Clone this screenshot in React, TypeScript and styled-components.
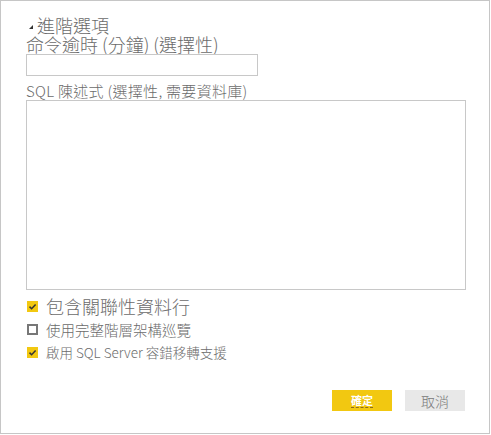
import React from 'react';
import styled, { createGlobalStyle } from 'styled-components';

const Global = createGlobalStyle`
  html, body { margin: 0; padding: 0; background: #fff; }
  body { font-family: "Noto Sans CJK TC", "Noto Sans", sans-serif; }
`;

const Panel = styled.div`
  width: 490px;
  height: 434px;
  box-sizing: border-box;
  border: 1px solid #c6c6c6;
  padding: 15px 24px 0 25px;
  display: flex;
  flex-direction: column;
  color: #6b6b6b;
`;

const Header = styled.div`
  display: flex;
  align-items: center;
  height: 19px;
  font-size: 18px;
  line-height: 19px;
  font-weight: 300;
`;

const Caret = styled.span`
  width: 0;
  height: 0;
  margin: 2px 4px 0 3px;
  border-left: 4px solid transparent;
  border-bottom: 4px solid #333;
`;

const Label = styled.div<{ $size: number; $spacing?: number }>`
  font-size: ${p => p.$size}px;
  line-height: ${p => p.$size + 1}px;
  letter-spacing: ${p => p.$spacing ?? 0}px;
  font-weight: 300;
  white-space: nowrap;
`;

const TextInput = styled.input`
  display: block;
  width: 232px;
  height: 22px;
  box-sizing: border-box;
  margin: 0;
  border: 1px solid #c8c8c8;
  outline: none;
`;

const TextBox = styled.textarea`
  display: block;
  width: 440px;
  height: 190px;
  box-sizing: border-box;
  margin: 1px 0 0;
  border: 1px solid #c8c8c8;
  resize: none;
  outline: none;
`;

const Options = styled.div`
  display: flex;
  flex-direction: column;
  margin-top: 4px;
`;

const OptionRow = styled.label<{ $size: number; $h: number }>`
  display: flex;
  align-items: center;
  gap: 8px;
  height: ${p => p.$h}px;
  font-size: ${p => p.$size}px;
  font-weight: 300;
  white-space: nowrap;
`;

const Box = styled.span<{ $checked: boolean }>`
  width: 11px;
  height: 11px;
  box-sizing: border-box;
  flex: none;
  display: flex;
  align-items: center;
  justify-content: center;
  margin-left: 1px;
  background: ${p => (p.$checked ? '#f2c811' : '#fff')};
  border: ${p => (p.$checked ? 'none' : '2px solid #777')};
`;

const Footer = styled.div`
  display: flex;
  justify-content: flex-end;
  gap: 13px;
  margin-top: auto;
  margin-bottom: 22px;
`;

const Button = styled.button<{ $primary?: boolean }>`
  width: 60px;
  height: 21px;
  border: none;
  padding: 0;
  font-family: inherit;
  cursor: pointer;
  background: ${p => (p.$primary ? '#f2c811' : '#e8e8e8')};
  color: ${p => (p.$primary ? '#fff' : '#777')};
  font-size: ${p => (p.$primary ? '11px' : '14px')};
  font-weight: ${p => (p.$primary ? 700 : 300)};
  display: flex;
  align-items: center;
  justify-content: center;
`;

const OkText = styled.span`
  line-height: 12px;
  border-bottom: 1px dashed #8a6a20;
  padding-bottom: 1px;
`;

const Check = () => (
  <svg width="9" height="9" viewBox="0 0 9 9">
    <path d="M1.5 4.6 L3.6 6.7 L7.6 2.4" fill="none" stroke="#333" strokeWidth="1.5" />
  </svg>
);

const Option = ({ checked, size, h, text }: { checked: boolean; size: number; h: number; text: string }) => (
  <OptionRow $size={size} $h={h}>
    <Box $checked={checked}>{checked && <Check />}</Box>
    {text}
  </OptionRow>
);

export default function App() {
  return (
    <>
      <Global />
      <Panel>
        <Header>
          <Caret />
          進階選項
        </Header>
        <Label $size={18}>命令逾時 (分鐘) (選擇性)</Label>
        <TextInput />
        <Label $size={15} $spacing={0.3} style={{ marginTop: 7 }}>SQL 陳述式 (選擇性, 需要資料庫)</Label>
        <TextBox />
        <Options>
          <Option checked size={18} h={24} text="包含關聯性資料行" />
          <Option checked={false} size={14.5} h={22} text="使用完整階層架構巡覽" />
          <Option checked size={13.5} h={24} text="啟用 SQL Server 容錯移轉支援" />
        </Options>
        <Footer>
          <Button $primary>
            <OkText>確定</OkText>
          </Button>
          <Button>取消</Button>
        </Footer>
      </Panel>
    </>
  );
}
